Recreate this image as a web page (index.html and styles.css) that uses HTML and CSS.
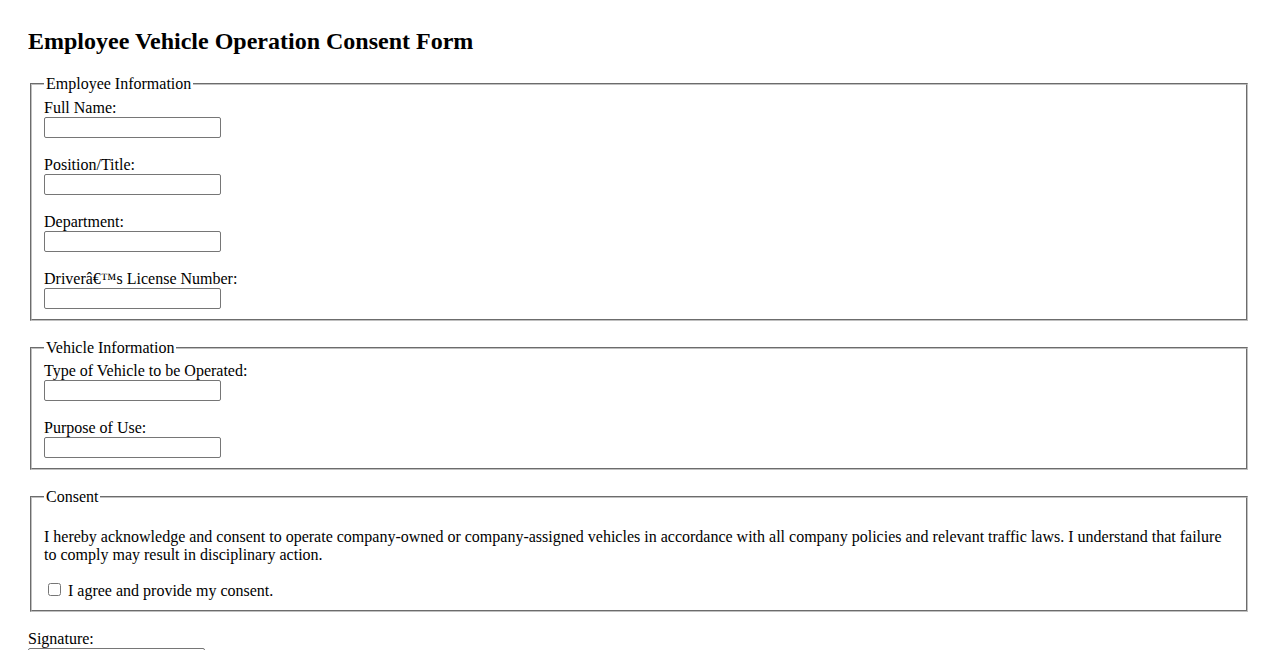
FILE: index.html
```html
<!DOCTYPE html>
<html lang="en">
<head>
  <meta charset="UTF-8" />
  <meta name="viewport" content="width=device-width, initial-scale=1" />
  <title>Employee Vehicle Operation Consent Form</title>
  <link rel="stylesheet" href="styles.css">
</head>
<body class="page">

  <h2 class="form-title">Employee Vehicle Operation Consent Form</h2>

  <form class="consent-form">
    <fieldset class="group">
      <legend class="group-title">Employee Information</legend>
      <label for="fullName">Full Name:</label><br>
      <input class="field" type="text" id="fullName" name="fullName"><br><br>

      <label for="position">Position/Title:</label><br>
      <input class="field" type="text" id="position" name="position"><br><br>

      <label for="department">Department:</label><br>
      <input class="field" type="text" id="department" name="department"><br><br>

      <label for="license">Driverâ€™s License Number:</label><br>
      <input class="field" type="text" id="license" name="license">
    </fieldset>
    <br>

    <fieldset class="group">
      <legend class="group-title">Vehicle Information</legend>
      <label for="vehicleType">Type of Vehicle to be Operated:</label><br>
      <input class="field" type="text" id="vehicleType" name="vehicleType"><br><br>

      <label for="purpose">Purpose of Use:</label><br>
      <input class="field" type="text" id="purpose" name="purpose">
    </fieldset>
    <br>

    <fieldset class="group">
      <legend class="group-title">Consent</legend>
      <p class="consent-text">I hereby acknowledge and consent to operate company-owned or company-assigned vehicles in accordance with all company policies and relevant traffic laws. I understand that failure to comply may result in disciplinary action.</p>
      <input class="check" type="checkbox" id="agree" name="agree">
      <label for="agree">I agree and provide my consent.</label>
    </fieldset>
    <br>

    <label for="signature">Signature:</label><br>
    <input class="field" type="text" id="signature" name="signature"><br><br>
  </form>

</body>
</html>
```

FILE: styles.css
```css
.page {
  margin: 28px;
  font-family: "Liberation Serif", "Times New Roman", serif;
  font-size: 16px;
  color: #000;
  background: #fff;
}

.form-title {
  font-size: 1.5em;
  font-weight: bold;
  margin: 0 0 0.83em;
}

.group {
  margin: 0 2px;
  padding: 0.35em 0.75em 0.625em;
  border: 2px groove rgb(192, 192, 192);
}

.group-title {
  padding: 0 2px;
}

.field {
  box-sizing: border-box;
  width: 177px;
  height: 21px;
  font-family: "Liberation Sans", Arial, sans-serif;
  font-size: 13.33px;
  padding: 1px 2px;
  border: 1px solid #767676;
  border-radius: 2px;
}

.consent-text {
  margin: 1em 0;
}

.check {
  margin: 3px 3px 3px 4px;
  width: 13px;
  height: 13px;
}
```
